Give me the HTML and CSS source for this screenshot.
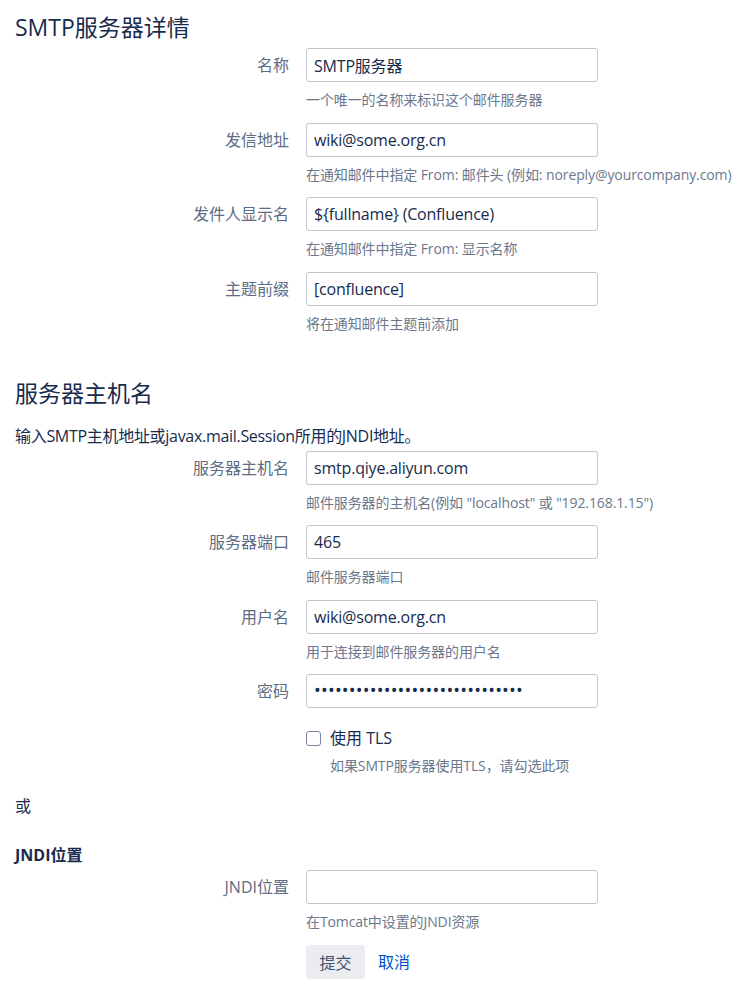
FILE: index.html
```html
<!DOCTYPE html>
<html lang="zh-CN">
<head>
<meta charset="utf-8">
<title>SMTP服务器详情</title>
<link rel="stylesheet" href="styles.css">
</head>
<body>
<form class="page">
  <h2 class="section-title first">SMTP服务器详情</h2>
  <div class="field-group">
    <label class="label">名称</label>
    <div class="control">
      <input class="text" type="text" value="SMTP服务器">
      <div class="desc">一个唯一的名称来标识这个邮件服务器</div>
    </div>
  </div>
  <div class="field-group">
    <label class="label">发信地址</label>
    <div class="control">
      <input class="text" type="text" value="wiki@some.org.cn">
      <div class="desc">在通知邮件中指定 From: 邮件头 (例如: noreply@yourcompany.com)</div>
    </div>
  </div>
  <div class="field-group">
    <label class="label">发件人显示名</label>
    <div class="control">
      <input class="text" type="text" value="${fullname} (Confluence)">
      <div class="desc">在通知邮件中指定 From: 显示名称</div>
    </div>
  </div>
  <div class="field-group">
    <label class="label">主题前缀</label>
    <div class="control">
      <input class="text" type="text" value="[confluence]">
      <div class="desc">将在通知邮件主题前添加</div>
    </div>
  </div>

  <h2 class="section-title second">服务器主机名</h2>
  <p class="intro">输入SMTP主机地址或javax.mail.Session所用的JNDI地址。</p>
  <div class="field-group">
    <label class="label">服务器主机名</label>
    <div class="control">
      <input class="text" type="text" value="smtp.qiye.aliyun.com">
      <div class="desc">邮件服务器的主机名(例如 "localhost" 或 "192.168.1.15")</div>
    </div>
  </div>
  <div class="field-group">
    <label class="label">服务器端口</label>
    <div class="control">
      <input class="text" type="text" value="465">
      <div class="desc">邮件服务器端口</div>
    </div>
  </div>
  <div class="field-group">
    <label class="label">用户名</label>
    <div class="control">
      <input class="text" type="text" value="wiki@some.org.cn">
      <div class="desc">用于连接到邮件服务器的用户名</div>
    </div>
  </div>
  <div class="field-group">
    <label class="label">密码</label>
    <div class="control">
      <div class="text password">••••••••••••••••••••••••••••••</div>
    </div>
  </div>
  <div class="field-group checkbox-group">
    <span class="label"></span>
    <div class="control">
      <label class="check"><span class="box"></span><span>使用 TLS</span></label>
      <div class="desc indent">如果SMTP服务器使用TLS，请勾选此项</div>
    </div>
  </div>

  <p class="or">或</p>
  <h3 class="sub-title">JNDI位置</h3>
  <div class="field-group">
    <label class="label">JNDI位置</label>
    <div class="control">
      <input class="text" type="text" value="">
      <div class="desc">在Tomcat中设置的JNDI资源</div>
    </div>
  </div>
  <div class="field-group buttons">
    <span class="label"></span>
    <div class="control actions">
      <button type="button" class="btn">提交</button>
      <a class="cancel" href="#">取消</a>
    </div>
  </div>
</form>
</body>
</html>
```

FILE: styles.css
```css
html, body {
  margin: 0;
  padding: 0;
  background: #ffffff;
}
body {
  font-family: "Open Sans", "Noto Sans CJK SC", sans-serif;
  color: #172b4d;
  font-size: 16px;
  line-height: 20px;
}
.page {
  padding: 0 15px;
}
.section-title {
  margin: 0;
  font-size: 23px;
  font-weight: 400;
  line-height: 30px;
  color: #172b4d;
}
.section-title.first {
  padding-top: 12px;
  margin-bottom: 6px;
}
.section-title.second {
  margin-top: 44px;
}
.intro {
  margin: 18px 0 5px;
  font-size: 16px;
  line-height: 20px;
  letter-spacing: -0.3px;
}
.field-group {
  display: grid;
  grid-template-columns: 274px 292px;
  column-gap: 17px;
  margin-bottom: 12.5px;
}
.label {
  text-align: right;
  color: #5e6c84;
  font-size: 16px;
  line-height: 34px;
}
.control {
  display: flex;
  flex-direction: column;
}
.text {
  box-sizing: border-box;
  width: 292px;
  height: 34px;
  margin: 0;
  padding: 0 7px;
  border: 1px solid #c1c7d0;
  border-radius: 3px;
  background: #ffffff;
  font-family: "Open Sans", "Noto Sans CJK SC", sans-serif;
  font-size: 16px;
  letter-spacing: -0.2px;
  color: #172b4d;
  outline: none;
}
.password {
  display: flex;
  align-items: center;
  padding-bottom: 2px;
  font-size: 18px;
  letter-spacing: 0.2px;
  color: #172b4d;
  overflow: hidden;
  white-space: nowrap;
}
.desc {
  margin-top: 8px;
  font-size: 14px;
  line-height: 20px;
  color: #6b778c;
  white-space: nowrap;
  letter-spacing: -0.1px;
}
.desc.indent {
  padding-left: 24px;
}
.checkbox-group {
  margin-top: 20px;
}
.check {
  display: flex;
  align-items: center;
  gap: 9px;
  height: 20px;
  font-size: 16px;
  color: #172b4d;
}
.box {
  box-sizing: border-box;
  width: 15px;
  height: 15px;
  border: 1px solid #7a869a;
  border-radius: 3px;
  background: #ffffff;
}
.or {
  margin: 20px 0 0;
  line-height: 20px;
}
.sub-title {
  margin: 29px 0 5px;
  font-size: 16px;
  font-weight: 700;
  line-height: 20px;
  color: #172b4d;
}
.actions {
  flex-direction: row;
  align-items: center;
  gap: 13px;
}
.btn {
  height: 34px;
  padding: 0 13.5px;
  border: 0;
  border-radius: 3px;
  background: #ebecf0;
  font-family: "Open Sans", "Noto Sans CJK SC", sans-serif;
  font-size: 16px;
  color: #42526e;
}
.cancel {
  color: #0052cc;
  text-decoration: none;
  font-size: 16px;
}
```
